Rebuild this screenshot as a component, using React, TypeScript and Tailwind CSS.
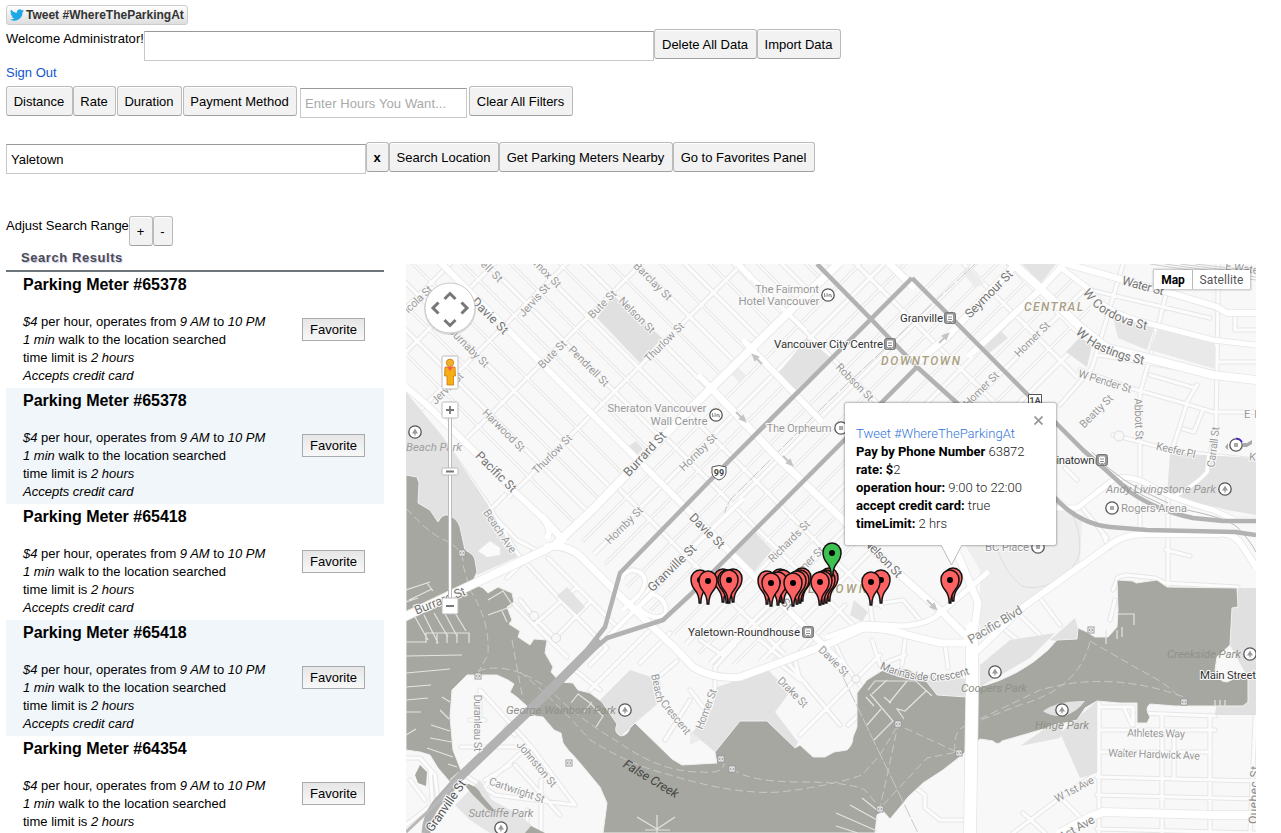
import React from "react";

const WATER =
  "M406 475L417 477L419 483L418 503L430 510L438 522Q442 514 448 515Q457 518 460 527L465 550Q474 554 475 560L477 572L472 583L483 588L488 593L498 587L512 593L514 602L507 607L512 620L509 624L520 631L518 637L530 645L534 639L547 640L545 653L553 667L551 672L560 682L573 683L578 690L590 693L602 702L617 724Q613 733 621 736Q628 735 630 728L635 723L672 759L682 765L717 763L715 752L740 721L767 721L795 748L800 745L813 757H825L834 752L847 750Q853 745 853 737L857 727V693L867 680L883 670L907 669L923 677L937 695L967 697L980 687Q1020 676 1048 650L1057 640L1077 639L1078 628L1087 632L1095 637L1108 637L1117 627L1118 610L1117 580L1133 581L1136 583L1157 580L1167 587L1237 588L1238 607L1232 608L1230 645L1217 657L1215 670Q1218 682 1227 682L1236 678L1248 678V702L1243 706H1175L1150 704Q1144 708 1150 717L1147 723H1137V703L1120 703L1097 701L1085 708L1077 720L1065 723L1055 724L1047 728L1023 735L1002 741Q998 746 993 741L980 739L962 755L943 770L923 783L908 797L900 807L890 819L883 811L877 815L875 833H603L607 803L600 787L580 763L573 755L569 751L563 743L561 733L554 730L543 717L535 716L528 707L518 698L510 692L514 684L508 680L497 675H467L452 690L450 717L453 750L462 773L450 782L438 768L430 755L420 752L406 750Z";

type Poly = [string, string];
const PARKS: Poly[] = [
  ["M406 392L443 437L487 503L517 557L477 575L475 560L465 550L460 527L448 515L438 522L418 503V477L406 475Z", "#e2e2e2"],
  ["M613 295L662 338L640 363L597 318Z", "#e0e0e0"],
  ["M627 447L636 441L643 449L634 458Z", "#e3e3e3"],
  ["M807 338L830 357L793 393L777 375Z", "#e2e2e2"],
  ["M738 367L746 376L740 383L730 373Z", "#ececec"],
  ["M968 266L984 283L975 288L963 273Z", "#ececec"],
  ["M753 530L772 550L753 573L733 555Z", "#e2e2e2"],
  ["M567 587L585 607L577 615L557 596Z", "#e3e3e3"],
  ["M630 670L660 680L662 700L635 723L630 728L621 736L613 731L617 724L600 700Z", "#e2e2e2"],
  ["M717 687L768 670L790 692L775 712L798 742L795 748L767 721H740L715 752L692 733L713 707Z", "#e2e2e2"],
  ["M690 730L700 740L690 745Z", "#ececec"],
  ["M918 674L968 679V697L937 695Z", "#e2e2e2"],
  ["M980 665L1010 640L1055 633L1030 658L980 687Z", "#e2e2e2"],
  ["M1050 640L1075 618L1078 628V640L1057 641Z", "#e2e2e2"],
  ["M990 500L1057 495L1082 520L1080 565L1060 585L1010 612L980 630L980 570L962 540Z", "#eeeeee"],
  ["M1170 453L1256 458V515L1227 510L1167 495Z", "#e2e2e2"],
  ["M1238 588H1256V715H1215L1216 706L1248 702V678L1230 645L1232 608H1238Z", "#e0e0e0"],
  ["M1113 318L1155 325L1147 350L1118 338Z", "#e5e5e5"],
  ["M1159 324L1215 339V369L1150 350Z", "#e9e9e9"],
  ["M1080 337L1092 345L1087 367L1066 352Z", "#e0e0e0"],
  ["M980 341L1000 330L1008 338L988 354Z", "#e3e3e3"],
  ["M1022 264H1056L1041 283Z", "#e3e3e3"],
  ["M854 600L868 612L862 622L850 615Z", "#e3e3e3"],
  ["M1060 733L1097 701V773L1080 778Z", "#e2e2e2"],
  ["M1043 730L1065 720L1060 738L1020 746Z", "#e2e2e2"],
  ["M455 805L480 780L492 800L520 815L540 833H490L470 820Z", "#e4e4e4"],
  ["M406 620L416 618L421 634L406 639Z", "#e2e2e2"],
];

const nwse = (v: number, u0: number, u1: number) =>
  `M${(u0 - v) / 2} ${(u0 + v) / 2}L${(u1 - v) / 2} ${(u1 + v) / 2}`;
const nesw = (u: number, v0: number, v1: number) =>
  `M${(u - v0) / 2} ${(u + v0) / 2}L${(u - v1) / 2} ${(u + v1) / 2}`;

const westLanes = [-76, -123, -223, -271, -320, -373, -421, -470, -518, -566]
  .map((v) => nwse(v, 640, 1098)).join("");
const westAlleys = [-52, -100, -149, -199, -247, -296, -346, -397, -446, -494, -542]
  .map((v) => nwse(v, 640, 1098)).join("");
const westCross = [667, 714, 758, 830, 905, 1006].map((u) => nesw(u, -10, -700)).join("");
const cityLanes = [1148, 1238, 1330, 1374, 1422].map((u) => nesw(u, -40, -800)).join("");
const cityAlleys = [1124, 1169, 1214, 1261, 1307, 1352, 1398].map((u) => nesw(u, -40, -800)).join("");
const cityCross = [-130, -228, -275, -474, -592, -700, -745].map((v) => nwse(v, 1100, 1490)).join("");

const MINOR = [
  "M446 445L487 503L517 553L567 607L607 648L590 665",
  "M548 558L577 587L534 625L500 590M520 600L533 616L555 638M507 578L533 552M534 625L567 657",
  "M480 520L505 495M490 512L517 540L540 552M555 638L590 602M577 587L617 627",
  "M1167 290L1152 350L1140 393V530M1123 264L1092 368L1060 405M1218 264V300L1216 427L1210 455M1155 330L1216 345",
  "M1080 370L1130 388L1183 403L1213 412H1256M1113 435L1160 447L1193 453L1256 460M1090 290L1210 318M1098 355L1220 375",
  "M1188 400L1173 447M1197 385L1186 404M1150 375L1195 388M1202 412L1194 432L1183 429M1218 362H1256M1235 315V330H1256",
  "M1080 505L1107 538M1065 468L1077 480M1103 535L1109 548M1168 495V585M1166 550L1190 556",
  "M1113 590L1118 577L1127 575L1155 578L1165 583L1238 587M1110 620L1115 600",
  "M1040 598L1060 625M1020 615L1040 635M1005 630L1030 650",
  "M760 640L790 665L840 725M700 640L722 655L790 595M715 700V667L735 645M690 690L713 720",
  "M800 735L880 655M795 660L800 680L775 660M833 640L845 665L875 705M848 725L880 695M790 662L845 605",
  "M870 605L873 625M872 640L880 665M905 640L902 665M945 645L948 668M880 665L905 655M870 605L903 600L920 620",
  "M590 690L665 615M575 670L600 690M640 663L670 633M655 680L677 661M690 700L665 740M605 705L640 733",
  "M480 690L530 745L575 805M530 745L490 780L475 800M480 690V720M497 745L507 727L515 735M461 747H525M470 720H485",
  "M450 765L495 795L575 805M515 765L560 815M485 780L510 765M527 810V833M541 780V833M470 805L540 833",
  "M406 758H420L435 775L438 800L406 825M410 780L425 800M430 770L433 810",
  "M1099 703V833M1162 715V833M1174 735V779M1210 715V833M1100 707H1133V725M1138 713L1215 716M1125 710L1132 725",
  "M1099 730H1215M1099 752H1210M1097 777L1256 781M1097 795L1256 799M1097 829L1256 833M1256 700L1250 833",
  "M1097 773L1057 800L1013 833M1060 797L1085 822M1023 813L1045 833M966 820H940L925 808V795L912 785",
];

const MAJOR = [
  [nwse(-178, 700, 1500), 6],
  ["M406 387L427 405L480 457L515 492L543 518Q551 528 548 536", 6],
  ["M563 540L543 518M547 547Q570 543 587 563L617 593L677 650L693 667Q715 680 740 677L773 665L833 642L863 628Q890 628 907 635L940 643H963", 7],
  ["M400 619L465 588L555 545L590 512L690 409L750 350L840 262", 8],
  ["M828 637L863 624L903 626Q929 624 940 613L987 573", 5],
  ["M710 387L777 457L840 517L887 563L943 613L970 640", 7],
  ["M700 377L710 387M738 264L750 277M745 342L820 420", 6],
  ["M750 277L805 330M738 264L775 300", 4],
  ["M890 264L912 286", 7],
  ["M915 364L947 337L1016 264", 7],
  ["M970 355L1040 290L1066 262", 6],
  ["M1067 264L1113 277L1167 292L1217 307L1227 313H1256", 6],
  ["M1060 267L1090 290Q1102 312 1147 323L1213 340L1256 345", 5],
  ["M1010 261L1040 288L1080 327L1107 348L1147 358L1213 375L1256 380", 8],
  ["M970 658L1023 607L1107 547Q1123 534 1147 534H1217Q1234 531 1243 547L1256 567", 6],
  ["M1057 508H1077L1113 480Q1128 472 1153 487Q1170 498 1213 510L1235 520H1256", 5],
  ["M1209 455L1207 472Q1198 483 1173 497", 3.5],
  ["M957 553L970 583L978 603L973 640", 7],
  ["M972 628V700L970 833", 12],
  ["M1256 815L1215 815L1103 812L1090 817L1060 833", 8],
  ["M605 640L650 595L690 550L742 500", 4],
  ["M622 577Q630 566 641 573Q650 582 638 596L624 609M640 606L653 594Q669 601 665 614Q655 623 637 607", 4],
] as [string, number][];

const HIGHWAY =
  "M912 278L730 460L620 573L605 627L587 650M912 278L1030 397L1083 450L1107 471L1130 492Q1158 511 1193 518L1223 521H1256M817 264L870 318L917 367L957 403L1057 500Q1080 524 1110 527L1147 530L1235 532L1256 535M917 367L690 595L663 620L607 638L587 655";

const DOCKS =
  "M406 590L430 582M409 600L432 589M418 598L406 602M427 583L433 591M415 617L428 640M424 615L438 643M434 613L448 637M443 610L457 636M452 608L466 631M426 633H469V643M426 633V643M437 634V644M447 634V643M457 634V643M406 642H426M406 656L462 655M406 673L450 669M406 687L431 685M406 700L428 698M406 712L421 712M406 735L416 729M442 697L450 702M440 710L449 719M431 725L450 731M430 738L452 742M427 748L453 757M448 764L457 767M450 780L459 772M488 600L503 591L513 606L488 615M502 611L507 622M571 703L578 694L590 703L603 716L596 727M584 712L592 702M868 690L875 681H916L932 696M870 694L893 721L874 740M881 709L867 725M887 680L872 694M907 681L889 703M884 697L891 703M926 691L905 711L897 709L904 719M866 697L874 706M836 813L877 831M850 805L877 820M862 798L877 810M836 826L858 833M1118 614H1134V625M1122 627V637M1117 630V639M1106 630V644M1215 700V706M1220 700V706M1225 700V706M637 817L657 829L675 817M645 830H670M657 815V833";

const FERRY =
  "M406 508Q426 530 440 538Q465 548 463 565L470 590Q490 620 488 655Q480 668 478 674M512 640L523 700M478 671Q510 660 550 690Q580 720 620 743Q660 772 700 772Q725 774 724 763M520 672Q555 700 590 740Q630 765 670 775Q735 795 780 792Q830 786 862 775L880 755L898 725M732 769Q750 782 800 782Q850 782 865 790L880 808L898 725L957 752L927 758L882 806M955 752Q953 730 965 726L1020 705Q1080 688 1090 641M980 719L1040 690Q1110 670 1184 697M1090 641L1140 670Q1170 685 1182 700";

type Label = [string, number, number, number, number, string?, number?, string?];
const LABELS: Label[] = [
  ["ell St", 492, 271, 45, 26],
  ["icola St", 418, 299, -43, 34],
  ["Comox St", 543, 269, 45, 47],
  ["Jervis St", 534, 300, -48, 40],
  ["Bute St", 602, 304, -45, 35],
  ["Bute St", 552, 354, -45, 35],
  ["Barclay St", 653, 281, 45, 49],
  ["Nelson St", 637, 315, 45, 46],
  ["Thurlow St", 664, 342, -45, 51],
  ["Thurlow St", 552, 454, -45, 51],
  ["Burnaby St", 469, 347, 45, 52],
  ["Pendrell St", 589, 366, 45, 52],
  ["Harwood St", 504, 430, 45, 55],
  ["Jervis St", 447, 388, -45, 40],
  ["Davie St", 490, 316, 45, 46, "#757575", 12.5],
  ["Pacific St", 496, 472, 45, 52, "#757575", 12.5],
  ["Burrard St", 645, 454, -47, 56, "#757575", 12.5],
  ["Burrard St", 440, 601, -22, 54, "#757575", 12.5],
  ["Granville St", 672, 568, -44, 62, "#757575", 12.5],
  ["Davie St", 707, 531, 45, 44, "#757575", 12.5],
  ["Davie St", 776, 593, 45, 42, "#888", 12],
  ["Nelson St", 883, 558, 46, 49, "#757575", 12.5],
  ["Seymour St", 989, 294, -45, 62, "#757575", 12.5],
  ["Water St", 1143, 286, 15, 43, "#757575", 12.5],
  ["Pacific Blvd", 995, 625, -31, 61, "#888", 12.5],
  ["Beach Ave", 500, 531, 56, 50],
  ["Hornby St", 624, 525, -45, 48],
  ["Hornby St", 698, 452, -45, 48],
  ["Richards St", 789, 541, -45, 54],
  ["Homer St", 806, 564, -45, 45],
  ["Homer St", 1032, 339, -45, 45],
  ["Homer St", 981, 389, -45, 45],
  ["Robson St", 855, 382, 45, 48],
  ["W Pender St", 1105, 381, 17, 55],
  ["Beatty St", 1096, 411, -45, 42],
  ["Abbott St", 1139, 419, 88, 42],
  ["Carrall St", 1213, 447, -83, 41],
  ["Keefer Pl", 1176, 450, 13, 40],
  ["E Water St", 1250, 269, 8, 50],
  ["Davie St", 834, 661, 45, 38],
  ["Drake St", 793, 692, 45, 38],
  ["Homer St", 706, 709, -70, 42],
  ["Beach", 658, 688, 78, 29],
  ["Crescent", 676, 717, 51, 41],
  ["Duranleau St", 478, 723, 90, 57],
  ["Johnston St", 537, 764, 50, 56],
  ["Cartwright St", 517, 790, 19, 58],
  ["Athletes Way", 1156, 733, 1, 58],
  ["Walter Hardwick Ave", 1154, 754, 2, 92],
  ["W 1st Ave", 1074, 789, -28, 43],
  ["1st Ave", 1077, 828, -30, 38, "#888", 12],
  ["Quebec St", 1254, 795, -88, 58, "#888", 12],
  ["E Pender", 1268, 414, 0, 48],
  ["Keefer", 1266, 458, 6, 34],
  ["Granville St", 446, 806, -55, 60, "#555", 12.5],
];
const CURVED: [string, string, string, number, string, number][] = [
  ["cordova", "M1086 290Q1102 319 1158 328", "W Cordova St", 73, "#757575", 12.5],
  ["hastings", "M1078 330Q1098 353 1156 363", "W Hastings St", 74, "#757575", 12.5],
  ["marinaside", "M881 665Q930 687 974 668", "Marinaside Crescent", 90, "#888", 11],
];
const POIS: Label[] = [
  ["The Fairmont", 787, 289, 0, 64],
  ["Hotel Vancouver", 779, 301, 0, 81],
  ["Sheraton Vancouver", 657, 408, 0, 99],
  ["Wall Centre", 679, 421, 0, 57],
  ["The Orpheum", 799, 428, 0, 65],
  ["Rogers Arena", 1154, 508, 0, 66],
  ["BC Place", 1007, 547, 0, 44],
  ["Beach Park", 434, 447, 0, 56, "#a0a0a0", 11.5, "italic"],
  ["George Wainborn Park", 561, 710, 0, 110, "#8f918a", 11.5, "italic"],
  ["Sutcliffe Park", 501, 813, 0, 65, "#999", 11.5, "italic"],
  ["Coopers Park", 994, 688, 0, 66, "#8f918a", 11.5, "italic"],
  ["Hinge Park", 1062, 725, 0, 54, "#8f918a", 11.5, "italic"],
  ["Creekside Park", 1204, 654, 0, 74, "#8f918a", 11.5, "italic"],
  ["Andy Livingstone Park", 1161, 489, 0, 110, "#999", 11.5, "italic"],
];
const STATIONS: [string, number, number, number][] = [
  ["Granville", 921.5, 318, 43],
  ["Vancouver City Centre", 828.5, 344, 109],
  ["Yaletown-Roundhouse", 744, 632, 112],
  ["Chinatown", 1069, 460, 51],
  ["Main Street", 1228, 675, 56],
];
const BADGES: [number, number, string][] = [
  [828, 295, "bed"], [716, 415, "bed"], [841, 428, "dot"], [415, 432, "tree"], [1225, 489, "tree"],
  [1112, 508, "dot"], [1038, 547, "dot"], [625, 710, "tree"], [501, 828, "tree"], [995, 672, "tree"],
  [1062, 710, "tree"], [1250, 654, "tree"], [1236, 445, "dot"],
];
const PINS: [number, number][] = [
  [700, 603], [723, 602], [733, 602], [727, 603], [708, 604], [729, 603],
  [780, 602], [767, 604], [783, 603], [778, 605], [802, 601], [800, 603], [797, 604], [771, 606], [793, 606],
  [829, 601], [826, 603], [823, 604], [820, 605], [881, 603], [871, 605], [953, 601], [950, 603],
];

function MapText({ l, halo = true }: { l: Label; halo?: boolean }) {
  const [t, x, y, a, len, fill = "#999", size = 11, style = "normal"] = l;
  return (
    <text
      transform={`translate(${x} ${y}) rotate(${a})`}
      y={4}
      textAnchor="middle"
      textLength={len}
      fontSize={size}
      fontStyle={style}
      fill={fill}
      stroke={halo ? "#fafafa" : "none"}
      strokeWidth={halo ? 2 : 0}
      paintOrder="stroke"
    >
      {t}
    </text>
  );
}

function Pin({ x, y, color = "#fe6262" }: { x: number; y: number; color?: string }) {
  return (
    <g transform={`translate(${x} ${y})`}>
      <path
        d="M-.8 0C-.8-6-2-9.500-5-13C-8-16.500-9-19-9-23.500A9 9.500 0 0 1 9-23.500C9-19 8-16.500 5-13C2-9.500 .8-6 .8 0Z"
        fill={color}
        stroke="#111"
        strokeWidth="1.500"
      />
      <circle cy="-23" r="3" fill="#000" />
    </g>
  );
}

function Train({ x, y }: { x: number; y: number }) {
  return (
    <g transform={`translate(${x} ${y})`}>
      <rect x="-5.500" y="-5.500" width="11" height="11" rx="2" fill="#999" stroke="#777" />
      <rect x="-3" y="-3.500" width="6" height="6.500" rx="1" fill="#fff" />
      <path d="M-2-1H2M-2 1.500H2" stroke="#888" />
      <path d="M-2.500 4.500L-1.500 3.500M2.500 4.500L1.500 3.500" stroke="#fff" />
    </g>
  );
}

function CityMap() {
  return (
    <svg className="block h-[569px] w-[850px]" viewBox="406 264 850 569" fontFamily="Roboto, sans-serif">
      <defs>
        <clipPath id="west">
          <path d="M406 264H837L690 409L590 512L553 544L517 553L446 445L406 387Z" />
        </clipPath>
        <clipPath id="city">
          <path d="M837 264H1060L1092 300L1080 370L1057 430V500L975 570L940 615L860 622L773 658L715 667L560 545L590 512L690 409Z" />
        </clipPath>
        {CURVED.map(([id, d]) => <path key={id} id={id} d={d} />)}
      </defs>
      <rect x="406" y="264" width="850" height="569" fill="#f8f8f8" />
      {[["#e6e6e6", 1.2], ["#fcfcfc", -0.8]].map(([c, d]) => (
        <g key={c} fill="none" stroke={c as string}>
          <g clipPath="url(#west)">
            <path d={westAlleys} strokeWidth={2.4 + (d as number)} />
            <path d={westLanes + westCross} strokeWidth={4 + (d as number)} />
          </g>
          <g clipPath="url(#city)">
            <path d={cityAlleys} strokeWidth={2.4 + (d as number)} />
            <path d={cityLanes + cityCross} strokeWidth={4.2 + (d as number)} />
          </g>
          <path d={MINOR.join("")} strokeWidth={4 + (d as number)} strokeLinejoin="round" strokeLinecap="round" />
        </g>
      ))}
      {PARKS.map(([d, f]) => <path key={d} d={d} fill={f} />)}
      <path d="M478 551L490 541L500 548V555L487 557Z" fill="#fafafa" />
      <path d="M1037 500C1062 490 1084 520 1079 555C1070 580 1040 592 1022 586C1000 568 987 535 1000 511" fill="none" stroke="#ddd" />
      <path d={WATER} fill="#a5a7a0" stroke="#f0f0f0" strokeWidth="1" />
      <path d="M1043 711Q1058 700 1085 701Q1078 711 1065 716Q1050 717 1043 711Z" fill="#e2e2e2" />
      <path d="M420 765L427 772L426 786L418 783L415 775ZM463 783Q477 784 482 796L496 812L488 810L472 794Z M525 833L531 826L545 833Z" fill="#a5a7a0" />
      <path d={DOCKS} fill="none" stroke="#e4e4e2" strokeWidth="1.200" />
      <path d={FERRY} fill="none" stroke="#c8c9c5" strokeDasharray="8 4" />
      <path d="M725 520Q722 505 740 490L830 400L975 264M842 675L918 833" fill="none" stroke="#c9c9c9" strokeDasharray="14 2" />
      <path d="M1150 264L1256 280M1165 264L1256 277M1180 264L1256 274M1195 264L1256 271" stroke="#cfcfcf" fill="none" />
      {MAJOR.map(([d, w]) => <path key={d} d={d} fill="none" stroke="#e6e6e6" strokeWidth={w + 1.6} />)}
      {MAJOR.map(([d, w]) => <path key={d} d={d} fill="none" stroke="#fff" strokeWidth={w} strokeLinecap="round" />)}
      <path d="M1088 452Q1115 485 1165 506Q1220 515 1236 526Q1250 540 1256 552M1092 452Q1118 482 1168 503" fill="none" stroke="#bbb" />
      <path d={HIGHWAY} fill="none" stroke="#b2b2b2" strokeWidth="4.500" strokeLinejoin="round" />
      <path d="M600 640L563 677L533 707L460 777L437 803Q427 816 426 833" fill="none" stroke="#b2b2b2" strokeWidth="9" />
      <path d="M458 779L437 803L406 832" fill="none" stroke="#b9b9b9" strokeWidth="3" />
      <g fill="#c4c4c4" stroke="#c4c4c4" strokeWidth="2">
        <path d="M762 364L756 358M753 355L755 360L758 357ZM736 412L742 418M745 421L743 416L740 419ZM783 456L789 462M792 465L790 460L787 463ZM939 343L945 337M948 334L943 336L946 339ZM927 600L933 606M936 609L934 604L931 607Z" />
      </g>
      {[[462, 553], [478, 676], [569, 763], [721, 759], [732, 769], [898, 724], [959, 753], [880, 809], [1091, 630], [1184, 702]].map(([x, y]) => (
        <g key={x}>
          <rect x={x - 3} y={y - 3} width="6" height="6" fill="#fff" stroke="#999" />
          <path d={`M${x - 1.5} ${y + 1}V${y - 1}H${x + 1.5}V${y + 1}Z`} stroke="#aaa" fill="none" />
        </g>
      ))}
      <circle cx="856" cy="679" r="4" fill="#f8f8f8" stroke="#ddd" />
      <circle cx="534" cy="616" r="4.500" fill="#f8f8f8" stroke="#ddd" />
      <circle cx="556" cy="638" r="4.500" fill="#f8f8f8" stroke="#ddd" />
      <circle cx="1119" cy="436" r="5" fill="#f8f8f8" stroke="#ddd" />
      {LABELS.map((l, i) => <MapText key={i} l={l} />)}
      {CURVED.map(([id, , t, len, fill, size]) => (
        <text key={id} dy="4" fontSize={size} fill={fill} stroke="#fafafa" strokeWidth="2" paintOrder="stroke" textLength={len}>
          <textPath href={`#${id}`} textLength={len}>{t}</textPath>
        </text>
      ))}
      {POIS.map((l, i) => <MapText key={i} l={l[5] ? l : [l[0], l[1], l[2], l[3], l[4], "#999", 11.5]} halo={!l[5]} />)}
      <text transform="translate(651 779) rotate(31)" y="4" textAnchor="middle" textLength="62" fontSize="12.500" fontStyle="italic" fill="#444">False Creek</text>
      <g fontStyle="italic" fontSize="12" fontWeight="500" fill="#aaa083" stroke="#fafafa" strokeWidth="2" paintOrder="stroke">
        <text x="881" y="365" textLength="79">DOWNTOWN</text>
        <text x="1024" y="311" textLength="59">CENTRAL</text>
        <text x="789" y="593" textLength="78">YALETOWN</text>
      </g>
      {STATIONS.map(([t, x, y, w]) => (
        <MapText key={t} l={[t, x, y, 0, w, "#333", 11.5]} />
      ))}
      {[[950, 318], [890, 344], [808, 632], [1102, 460]].map(([x, y]) => <Train key={x} x={x} y={y} />)}
      {BADGES.map(([x, y, k]) => (
        <g key={x + "-" + y} transform={`translate(${x} ${y})`}>
          <circle r="6.200" fill="#fff" stroke="#555" strokeWidth="1.300" />
          {k === "dot" && <rect x="-2" y="-2" width="4" height="4" fill="#aaa" />}
          {k === "tree" && <path d="M0-3.500L3 1.500H.6V3.500H-.6V1.500H-3Z" fill="#999" />}
          {k === "bed" && <path d="M-3.500-2V2M-3.500 1H3.500V2.500M-2-1H0V1M1-.5H3V1" fill="none" stroke="#999" />}
        </g>
      ))}
      <path d="M1236 438.500A6.500 6.500 0 0 1 1242 442" fill="none" stroke="#4a18e0" strokeWidth="1.500" />
      <path d="M1243 443H1247L1252 440V444L1247 447H1243ZM1228 443L1225 447L1228 450Z" fill="#aaa" />
      <path d="M712 467Q719 464 726 467V473Q725 478 719 480Q713 478 712 473Z" fill="#fff" stroke="#555" />
      <text x="719" y="476" textAnchor="middle" fontSize="9" fontWeight="700" fill="#444">99</text>
      <path d="M1028.500 394.500H1041.500V410H1028.500Z" fill="#fff" stroke="#555" />
      <text x="1035" y="403.500" textAnchor="middle" fontSize="9.500" fontWeight="500" fill="#444">1A</text>
      {PINS.map(([x, y]) => <Pin key={x} x={x} y={y} />)}
      <Pin x={832} y={576} color="#3dc252" />
    </svg>
  );
}

function Button({ children, className }: { children: React.ReactNode; className: string }) {
  return (
    <button className={`h-[30px] shrink-0 whitespace-nowrap rounded-[3px] border border-[#bbb] border-b-[#a0a0a0] bg-[#f2f2f2] p-0 pr-px text-[13px] leading-none shadow-[inset_0_1px_1px_#fff] ${className}`}>
      {children}
    </button>
  );
}

const FIELD =
  "mt-[2px] h-[30px] shrink-0 border border-[#c8c8c8] border-t-[#999] bg-white px-1 text-[13px] text-black outline-none placeholder:text-[#a9a9a9]";

function Meter({ id, alt }: { id: string; alt: boolean }) {
  return (
    <article className={`flex h-[116px] justify-between pl-[17px] pr-[19px] ${alt ? "bg-[#f0f6fa]" : "bg-white"}`}>
      <div>
        <h2 className="h-[41px] pt-[3px] text-[16px] font-bold leading-[20px]">Parking Meter #{id}</h2>
        <div className="whitespace-nowrap text-[13px] leading-[18px]">
          <p><i>$4</i> per hour, operates from <i>9 AM</i> to <i>10 PM</i></p>
          <p><i>1 min</i> walk to the location searched</p>
          <p>time limit is <i>2 hours</i></p>
          <p><i>Accepts credit card</i></p>
        </div>
      </div>
      <button className="mt-[46px] h-[23px] w-[63px] border border-[#aaa] bg-gradient-to-b from-[#e6e6e6] to-[#f8f8f8] text-[13px] leading-none">
        Favorite
      </button>
    </article>
  );
}

export default function App() {
  return (
    <main className="h-[833px] w-[1281px] overflow-hidden bg-white pl-[6px] pt-[5px] font-['Liberation_Sans',Arial,sans-serif] text-[13px] text-black">
      <div className="h-[24px]">
        <button className="flex h-5 w-[182px] items-center whitespace-nowrap rounded-[3px] border border-[#ccc] bg-gradient-to-b from-white to-[#dedede] pl-[3px] text-[12px] font-bold leading-none text-[#333]">
          <svg className="mr-[2px] h-[14px] w-[14px] shrink-0" viewBox="0 0 24 24" fill="#20a8e6">
            <path d="M24 4.600a10 10 0 0 1-2.800.8 5 5 0 0 0 2.100-2.700 10 10 0 0 1-3.100 1.200 4.900 4.900 0 0 0-8.400 4.500A14 14 0 0 1 1.700 3.200 4.900 4.900 0 0 0 3.200 9.700 5 5 0 0 1 1 9.100a4.900 4.900 0 0 0 4 4.900 5 5 0 0 1-2.200.1 4.900 4.900 0 0 0 4.600 3.400A9.900 9.900 0 0 1 0 19.500 14 14 0 0 0 21.500 7.100 10 10 0 0 0 24 4.600z" />
          </svg>
          <span>Tweet #WhereTheParkingAt</span>
        </button>
      </div>
      <div className="flex h-[35px]">
        <span className="w-[138px] shrink-0 whitespace-nowrap pt-[2px] leading-[16px] tracking-[0.04px]">Welcome Administrator!</span>
        <input className={`w-[510px] ${FIELD}`} aria-label="Data" />
        <Button className="w-[103px]">Delete All Data</Button>
        <Button className="w-[84px]">Import Data</Button>
      </div>
      <a className="block h-[22px] leading-[18px] text-[#15c]" href="#">Sign Out</a>
      <div className="flex h-[56px]">
        <Button className="w-[67px]">Distance</Button>
        <Button className="w-[43px]">Rate</Button>
        <Button className="ml-px w-[65px]">Duration</Button>
        <Button className="ml-px w-[114px]">Payment Method</Button>
        <input className={`ml-[3px] w-[167px] tracking-[0.1px] ${FIELD}`} placeholder="Enter Hours You Want..." />
        <Button className="ml-[2px] w-[104px]">Clear All Filters</Button>
      </div>
      <div className="flex h-[74px]">
        <input className={`w-[360px] ${FIELD}`} defaultValue="Yaletown" aria-label="Location" />
        <Button className="w-[23px] font-bold">x</Button>
        <Button className="w-[110px]">Search Location</Button>
        <Button className="w-[174px]">Get Parking Meters Nearby</Button>
        <Button className="w-[142px]">Go to Favorites Panel</Button>
      </div>
      <div className="flex h-[30px]">
        <span className="w-[123px] shrink-0 whitespace-nowrap pt-[2px] leading-[16px]">Adjust Search Range</span>
        <Button className="w-[24px]">+</Button>
        <Button className="w-[20px]">-</Button>
      </div>
      <div className="flex">
        <section className="w-[378px] shrink-0">
          <h1 className="h-[26px] border-b-2 border-[#6b737b] pl-[15px] pt-[4px] text-[13px] font-bold leading-[16px] tracking-[0.57px] text-[#4c4c55] [text-shadow:1px_1px_1px_#ccccee]">
            Search Results
          </h1>
          {["65378", "65378", "65418", "65418", "64354"].map((id, i) => (
            <Meter key={i} id={id} alt={i % 2 === 1} />
          ))}
        </section>
        <section className="relative ml-[22px] mt-[18px] h-[569px] w-[850px] shrink-0 overflow-hidden font-['Roboto',sans-serif]">
          <CityMap />
          <div className="absolute left-[439px] top-[139px] h-[142px] w-[211px] rounded-[2px] bg-white pl-[11px] pt-[22px] text-[13px] font-light leading-[18px] text-[#222] shadow-[0_0_2px_1px_rgba(0,0,0,0.28)]">
            <svg className="absolute right-[13px] top-[13px] h-[9px] w-[9px]" viewBox="0 0 9 9" stroke="#999" strokeWidth="1.800">
              <path d="M.5 .5L8.500 8.500M8.500 .5L.5 8.500" />
            </svg>
            <p className="text-[#2f74d8]">Tweet #WhereTheParkingAt</p>
            <p><b className="font-bold text-black">Pay by Phone Number</b> 63872</p>
            <p><b className="font-bold text-black">rate: $</b>2</p>
            <p><b className="font-bold text-black">operation hour:</b> 9:00 to 22:00</p>
            <p><b className="font-bold text-black">accept credit card:</b> true</p>
            <p><b className="font-bold text-black">timeLimit:</b> 2 hrs</p>
          </div>
          <svg className="absolute left-[534px] top-[279px] h-6 w-[24px]" viewBox="0 0 24 24">
            <path d="M0 0L11.500 22L23 0Z" fill="#fff" />
            <path d="M1 2L11.500 22L22 2" fill="none" stroke="#bbb" />
          </svg>
          <div className="absolute left-[748px] top-[6px] flex h-[19px] w-[96px] items-center bg-white text-[12px] leading-none shadow-[0_0_2px_1px_rgba(0,0,0,0.25)]">
            <b className="w-[38px] text-center font-bold text-black">Map</b>
            <span className="flex h-full flex-1 items-center justify-center border-l border-[#bbb] tracking-[0.1px] text-[#555]">Satellite</span>
          </div>
          <svg className="absolute left-[15px] top-[15px] h-[58px] w-[58px]" viewBox="0 0 58 58">
            <circle cx="29" cy="30" r="26" fill="#bbb" opacity=".5" />
            <circle cx="29" cy="29" r="25" fill="#fff" stroke="#ccc" />
            <path d="M23.500 20L29 14.500L34.500 20M23.500 41L29 46.500L34.500 41M17.500 23.500L12 29L17.500 34.500M40.500 23.500L46 29L40.500 34.500" fill="none" stroke="#777" strokeWidth="3" />
          </svg>
          <svg className="absolute left-[34px] top-[90px] h-[262px] w-[20px]" viewBox="0 0 20 262">
            <g fill="#fff" stroke="#bbb">
              <rect x="8.500" y="55" width="3" height="196" />
              <rect x="2" y="2" width="16" height="33" rx="1.500" />
              <rect x="2" y="48" width="16" height="16" rx="1.500" />
              <rect x="2" y="114" width="16" height="7" rx="1.500" />
              <rect x="2" y="244" width="16" height="16" rx="1.500" />
            </g>
            <path d="M6 56H14M10 52V60M6 252H14M6 117.500H14" stroke="#777" strokeWidth="1.800" />
            <path d="M5 13H15L15.500 22H13.500V31H7V22H4.500Z" fill="#f6ae13" stroke="#c87916" strokeWidth=".8" />
            <path d="M7 13H13L10 17Z" fill="#f55" />
            <circle cx="10" cy="8.800" r="3.700" fill="#f4b126" stroke="#c87916" strokeWidth=".8" />
          </svg>
        </section>
      </div>
    </main>
  );
}
